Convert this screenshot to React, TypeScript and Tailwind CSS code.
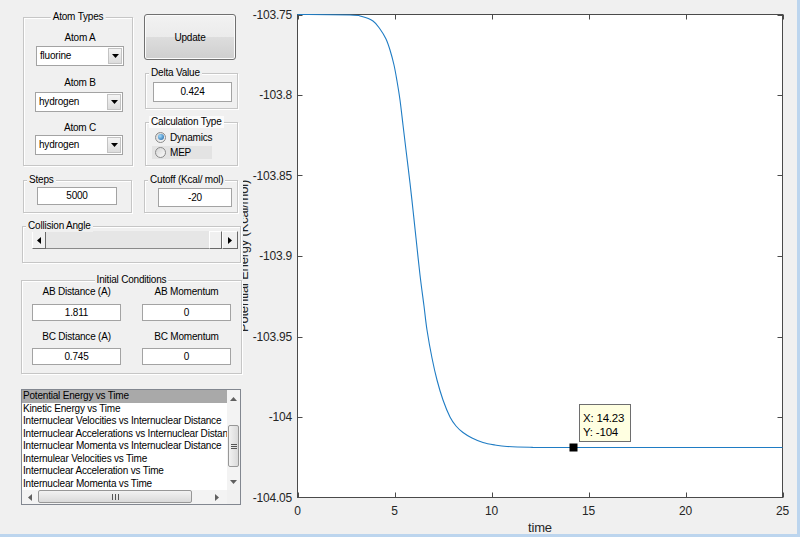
import type { ReactNode } from "react";

type Pt = [number, number];

// axes frame in page pixels
const X0 = 297.5;
const X1 = 782.5;
const Y0 = 14.5;
const Y1 = 497.5;
const xs = (t: number) => X0 + (t / 25) * (X1 - X0);
const ys = (v: number) => Y0 + ((v + 103.75) / -0.3) * (Y1 - Y0);

const curvePts: Pt[] = [
  [297.5, 14.5], [350, 15], [362, 16.5], [373, 21], [380, 29], [386, 39], [390, 50],
  [394, 65], [397, 81], [400, 100], [403, 125], [406, 150], [410, 183], [413, 210],
  [416, 238], [420, 275], [424, 306], [427, 330], [432, 358], [437, 380], [443, 400],
  [450, 417], [456, 426], [463, 432.5], [472, 438], [483, 442.5], [495, 445], [507, 446.5],
  [530, 447.3], [560, 447.5], [782.5, 447.5],
];

function smoothPath(pts: Pt[]) {
  let d = `M${pts[0][0]},${pts[0][1]}`;
  for (let i = 0; i < pts.length - 1; i++) {
    const p0 = pts[i - 1] || pts[i];
    const p1 = pts[i];
    const p2 = pts[i + 1];
    const p3 = pts[i + 2] || p2;
    const c1x = p1[0] + (p2[0] - p0[0]) / 6;
    const c1y = p1[1] + (p2[1] - p0[1]) / 6;
    const c2x = p2[0] - (p3[0] - p1[0]) / 6;
    const c2y = p2[1] - (p3[1] - p1[1]) / 6;
    d += ` C${c1x.toFixed(2)},${c1y.toFixed(2)} ${c2x.toFixed(2)},${c2y.toFixed(2)} ${p2[0]},${p2[1]}`;
  }
  return d;
}

const curve = smoothPath(curvePts);

const yTicks = [-103.75, -103.8, -103.85, -103.9, -103.95, -104, -104.05];
const xTicks = [0, 5, 10, 15, 20, 25];

const plots = [
  "Potential Energy vs Time",
  "Kinetic Energy vs Time",
  "Internuclear Velocities vs Internuclear Distance",
  "Internuclear Accelerations vs Internuclear Distance",
  "Internuclear Momenta vs Internuclear Distance",
  "Internulear Velocities vs Time",
  "Internuclear Acceleration vs Time",
  "Internuclear Momenta vs Time",
];

function GroupBox({
  title,
  center,
  className,
  titleClassName = "bg-[#f0f0f0]",
  children,
}: {
  title: string;
  center?: boolean;
  className?: string;
  titleClassName?: string;
  children?: ReactNode;
}) {
  return (
    <div
      className={`relative border border-[#c6c6c6] shadow-[inset_1px_1px_0_#fff,1px_1px_0_#fff] ${className}`}
    >
      <span
        className={`absolute top-[-7px] h-[12px] leading-[12px] px-[2px] whitespace-nowrap ${titleClassName} ${
          center ? "left-1/2 -translate-x-1/2" : "left-[3px]"
        }`}
      >
        {title}
      </span>
      {children}
    </div>
  );
}

function Field({ value, className }: { value: string; className?: string }) {
  return (
    <div
      className={`bg-white border border-[#a3a3a3] flex items-center justify-center leading-none ${className}`}
    >
      {value}
    </div>
  );
}

function Tri({ dir, color = "#000" }: { dir: "up" | "down" | "left" | "right"; color?: string }) {
  const d = {
    down: "M0 0H7L3.5 4Z",
    up: "M0 4H7L3.5 0Z",
    left: "M4 0V7L0 3.5Z",
    right: "M0 0V7L4 3.5Z",
  }[dir];
  const w = dir === "up" || dir === "down" ? 7 : 4;
  const h = dir === "up" || dir === "down" ? 4 : 7;
  return (
    <svg width={w} height={h} viewBox={`0 0 ${w} ${h}`}>
      <path d={d} fill={color} />
    </svg>
  );
}

function Select({ value, className }: { value: string; className?: string }) {
  return (
    <div className={`bg-white border border-[#a3a3a3] flex items-center h-[20px] ${className}`}>
      <span className="flex-1 pl-[3px] leading-none">{value}</span>
      <span className="w-[14px] h-[16px] mr-[1px] flex items-center justify-center border border-[#c3c3c3] bg-[linear-gradient(#f4f4f4,#dcdcdc)]">
        <Tri dir="down" />
      </span>
    </div>
  );
}

function Radio({ checked }: { checked?: boolean }) {
  return (
    <span className="w-[11px] h-[11px] rounded-full border border-[#8a8a8a] bg-[linear-gradient(135deg,#d6d6d6,#fafafa)] flex items-center justify-center">
      {checked && (
        <span className="w-[6px] h-[6px] rounded-full bg-[radial-gradient(circle_at_35%_35%,#9fdcff,#1a5c9c)]" />
      )}
    </span>
  );
}

function Raised({ className, children }: { className?: string; children?: ReactNode }) {
  return (
    <div
      className={`flex items-center justify-center bg-[#f0f0f0] border border-t-[#fff] border-l-[#fff] border-r-[#696969] border-b-[#696969] ${className}`}
    >
      {children}
    </div>
  );
}

function Chart() {
  return (
    <svg
      width={554}
      height={534}
      viewBox="243 0 554 534"
      className="shrink-0"
      fontFamily="'Liberation Sans', Arial, sans-serif"
    >
      <rect x={X0} y={Y0} width={X1 - X0} height={Y1 - Y0} fill="#fff" stroke="#4a4a4a" strokeWidth={1} />

      {yTicks.map((v) => {
        const y = Math.round(ys(v)) + 0.5;
        return (
          <g key={v}>
            <line x1={X0} x2={X0 + 5} y1={y} y2={y} stroke="#4a4a4a" />
            <line x1={X1} x2={X1 - 5} y1={y} y2={y} stroke="#4a4a4a" />
            <text x={292} y={ys(v) + 4} fontSize={12} fill="#262626" textAnchor="end">
              {v}
            </text>
          </g>
        );
      })}

      {xTicks.map((t) => {
        const x = Math.round(xs(t)) + 0.5;
        return (
          <g key={t}>
            <line x1={x} x2={x} y1={Y1} y2={Y1 - 5} stroke="#4a4a4a" />
            <line x1={x} x2={x} y1={Y0} y2={Y0 + 5} stroke="#4a4a4a" />
            <text x={xs(t)} y={515} fontSize={12} fill="#262626" textAnchor="middle">
              {t}
            </text>
          </g>
        );
      })}

      <text x={540} y={532} fontSize={13} fill="#262626" textAnchor="middle">
        time
      </text>
      {/* y label sits partly under the control panel, so only its right half shows */}
      <text
        x={247.5}
        y={256}
        fontSize={13}
        fill="#262626"
        textAnchor="middle"
        transform="rotate(-90 247.5 256)"
      >
        Potential Energy (Kcal/mol)
      </text>

      <path d={curve} fill="none" stroke="#1f7cc4" strokeWidth={1.1} />

      <rect x={569.5} y={443.5} width={8} height={8} fill="#000" />
      <rect x={579.5} y={404.5} width={51} height={37} fill="#ffffe1" stroke="#6e6e6e" />
      <text x={583} y={422} fontSize={11.5} fill="#000">
        X: 14.23
      </text>
      <text x={583} y={436} fontSize={11.5} fill="#000">
        Y: -104
      </text>
    </svg>
  );
}

export default function App() {
  return (
    <div className="w-[800px] h-[537px] bg-[#f0f0f0] flex border-r-[3px] border-b-[3px] border-[#bcd5ee] font-['Liberation_Sans',Arial,sans-serif] text-[10px] tracking-[-0.2px] text-black overflow-hidden">
      <div className="w-[243px] shrink-0 flex flex-col">
        {/* atom types + buttons */}
        <div className="flex pl-[23px] mt-[14px]">
          <GroupBox title="Atom Types" center className="w-[110px] h-[149px] mt-[3px]">
            <div className="flex flex-col pl-[12px]">
              <div className="mt-[14px] h-[12px] leading-[12px] text-center w-[88px]">Atom A</div>
              <Select value="fluorine" className="mt-[2px] w-[88px]" />
              <div className="mt-[11px] h-[12px] leading-[12px] text-center w-[88px]">Atom B</div>
              <Select value="hydrogen" className="mt-[3px] w-[88px] -ml-[1px]" />
              <div className="mt-[10px] h-[12px] leading-[12px] text-center w-[88px]">Atom C</div>
              <Select value="hydrogen" className="mt-[1px] w-[88px] -ml-[1px]" />
            </div>
          </GroupBox>

          <div className="ml-[11px] w-[94px] flex flex-col">
            <div className="w-[92px] h-[46px] rounded-[3px] border border-[#707070] shadow-[inset_0_0_0_1px_#fbfbfb] bg-[linear-gradient(#f2f2f2_0%,#ebebeb_50%,#dddddd_50%,#cfcfcf_100%)] flex items-center justify-center">
              Update
            </div>
            <GroupBox title="Delta Value" className="mt-[13px] ml-[1px] w-[93px] h-[36px]">
              <Field value="0.424" className="ml-[7px] mt-[8px] w-[79px] h-[20px]" />
            </GroupBox>
            <GroupBox
              title="Calculation Type"
              className="mt-[13px] ml-[1px] w-[93px] h-[44px]"
              titleClassName="bg-[#fbfbfb]"
            >
              <div className="flex flex-col pl-[6px]">
                <div className="mt-[7px] h-[14px] flex items-center gap-[4px] pl-[3px]">
                  <Radio checked />
                  <span>Dynamics</span>
                </div>
                <div className="mt-[2px] h-[13px] w-[60px] bg-[#e3e3e3] flex items-center gap-[4px] pl-[3px]">
                  <Radio />
                  <span>MEP</span>
                </div>
              </div>
            </GroupBox>
          </div>
        </div>

        {/* steps + cutoff */}
        <div className="flex pl-[23px] mt-[14px]">
          <GroupBox title="Steps" className="w-[109px] h-[33px]">
            <Field value="5000" className="ml-[13px] mt-[6px] w-[80px] h-[18px]" />
          </GroupBox>
          <GroupBox title="Cutoff (Kcal/ mol)" className="ml-[12px] w-[94px] h-[33px]">
            <Field value="-20" className="ml-[13px] mt-[7px] w-[74px] h-[19px]" />
          </GroupBox>
        </div>

        {/* collision angle slider */}
        <GroupBox title="Collision Angle" className="ml-[22px] mt-[13px] w-[219px] h-[37px]">
          <div className="ml-[9px] mt-[4px] w-[206px] h-[18px] flex">
            <Raised className="w-[14px] h-full">
              <Tri dir="left" />
            </Raised>
            <div className="w-[163px] h-full bg-[#e6e6e6] border-b border-[#8a8a8a]" />
            <Raised className="w-[13px] h-full" />
            <Raised className="w-[16px] h-full">
              <Tri dir="right" />
            </Raised>
          </div>
        </GroupBox>

        {/* initial conditions */}
        <GroupBox title="Initial Conditions" center className="ml-[21px] mt-[17px] w-[221px] h-[94px]">
          <div className="grid grid-cols-[89px_89px] gap-x-[21px] pl-[10px]">
            <div className="mt-[5px] h-[12px] leading-[12px] text-center">AB Distance (A)</div>
            <div className="mt-[5px] h-[12px] leading-[12px] text-center">AB Momentum</div>
            <Field value="1.811" className="mt-[6px] h-[17px]" />
            <Field value="0" className="mt-[6px] h-[17px]" />
            <div className="mt-[10px] h-[12px] leading-[12px] text-center">BC Distance (A)</div>
            <div className="mt-[10px] h-[12px] leading-[12px] text-center">BC Momentum</div>
            <Field value="0.745" className="mt-[5px] h-[17px]" />
            <Field value="0" className="mt-[5px] h-[17px]" />
          </div>
        </GroupBox>

        {/* plot list */}
        <div className="ml-[21px] mt-[15px] w-[220px] h-[116px] border border-[#828790] bg-white flex flex-col">
          <div className="flex h-[100px]">
            <div className="w-[205px] overflow-hidden text-[10px]">
              {plots.map((p, i) => (
                <div
                  key={p}
                  className={`h-[12.5px] leading-[12.5px] pl-[1px] whitespace-nowrap ${i === 0 ? "bg-[#a9a9a9]" : ""}`}
                >
                  {p}
                </div>
              ))}
            </div>
            <div className="w-[13px] flex flex-col bg-[#f3f3f3]">
              <div className="h-[17px] flex items-center justify-center">
                <Tri dir="up" color="#606060" />
              </div>
              <div className="flex-1 flex flex-col">
                <div className="mt-[18px] ml-[1px] w-[11px] h-[42px] rounded-[2px] border border-[#979797] bg-[linear-gradient(90deg,#f2f2f2,#dadada)] flex items-center justify-center">
                  <svg width={6} height={5}>
                    <path d="M0 0.5H6M0 2.5H6M0 4.5H6" stroke="#555" strokeWidth={1} />
                  </svg>
                </div>
              </div>
              <div className="h-[16px] flex items-center justify-center">
                <Tri dir="down" color="#606060" />
              </div>
            </div>
          </div>
          <div className="flex h-[14px]">
            <div className="w-[205px] flex bg-[#f3f3f3]">
              <div className="w-[16px] flex items-center justify-center">
                <Tri dir="left" color="#606060" />
              </div>
              <div className="w-[154px] h-[13px] rounded-[2px] border border-[#979797] bg-[linear-gradient(#f2f2f2,#dadada)] flex items-center justify-center">
                <svg width={7} height={6}>
                  <path d="M0.5 0V6M3.5 0V6M6.5 0V6" stroke="#555" strokeWidth={1} />
                </svg>
              </div>
              <div className="flex-1 flex items-center justify-end pr-[8px]">
                <Tri dir="right" color="#606060" />
              </div>
            </div>
            <div className="w-[13px] bg-[#f0f0f0]" />
          </div>
        </div>
      </div>

      <Chart />
    </div>
  );
}
